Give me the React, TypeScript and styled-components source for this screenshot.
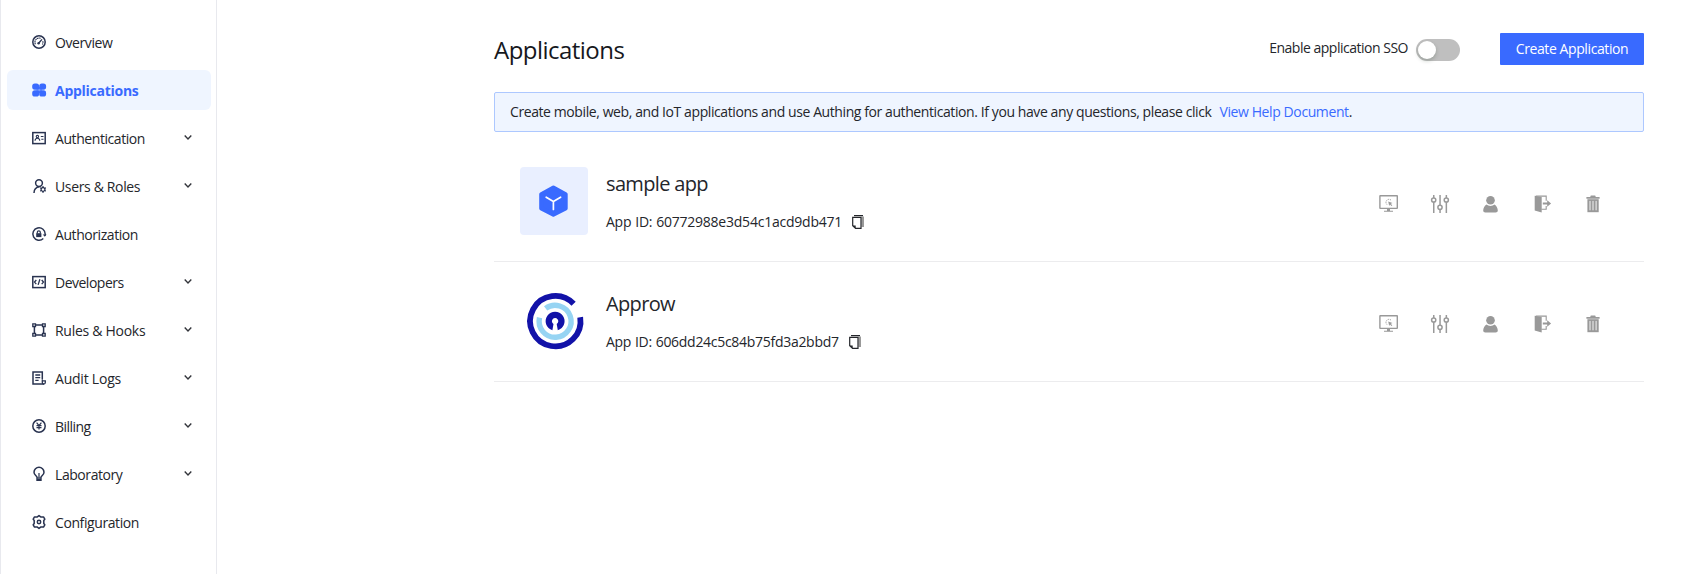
import React from 'react';
import styled, { createGlobalStyle } from 'styled-components';

const GlobalStyle = createGlobalStyle`
  * { box-sizing: border-box; }
  body {
    margin: 0;
    background: #fff;
    color: #24262b;
    font-family: 'Open Sans', 'Noto Sans', sans-serif;
    font-size: 14px;
    line-height: 21px;
    letter-spacing: -0.4px;
  }
`;

const Page = styled.div`
  display: flex;
  height: 574px;
  overflow: hidden;
`;

const Sidebar = styled.nav`
  display: flex;
  flex-direction: column;
  gap: 8px;
  width: 217px;
  flex: none;
  padding: 22px 5px 0 6px;
  border-left: 1px solid #e8e9ee;
  border-right: 1px solid #e8e9ee;
`;

const NavItem = styled.a<{ $active?: boolean }>`
  display: flex;
  align-items: center;
  height: 40px;
  flex: none;
  padding: 0 19px 0 25px;
  border-radius: 6px;
  cursor: pointer;
  color: ${p => (p.$active ? '#396aff' : '#24262b')};
  background: ${p => (p.$active ? '#eff5ff' : 'transparent')};
  font-weight: ${p => (p.$active ? 700 : 400)};
`;

const NavIcon = styled.svg<{ $active?: boolean }>`
  width: 14px;
  height: 14px;
  flex: none;
  margin-right: 9px;
  overflow: visible;
  fill: none;
  stroke: ${p => (p.$active ? '#396aff' : '#293350')};
  stroke-width: 1.5;
`;

const NavLabel = styled.span<{ $spacing: number }>`
  flex: 1;
  padding-top: 1px;
  white-space: nowrap;
  letter-spacing: ${p => p.$spacing}px;
`;

const Chevron = styled.svg`
  width: 8px;
  height: 5px;
  margin-top: -2px;
  fill: none;
  stroke: #33353b;
  stroke-width: 1.4;
`;

const Main = styled.main`
  flex: 1;
  display: flex;
  flex-direction: column;
  padding: 33px 62px 0 277px;
`;

const Header = styled.header`
  display: flex;
  align-items: flex-start;
  height: 59px;
`;

const Title = styled.h1`
  flex: 1;
  margin: 0;
  font-size: 24px;
  font-weight: 400;
  line-height: 33px;
  letter-spacing: -0.53px;
  color: #16181d;
`;

const SsoLabel = styled.span`
  margin: 4px 8px 0 0;
  letter-spacing: -0.49px;
`;

const Switch = styled.button`
  width: 44px;
  height: 22px;
  margin: 6px 40px 0 0;
  padding: 2px;
  border: 0;
  border-radius: 11px;
  background: #bfbfbf;
`;

const SwitchThumb = styled.span`
  display: block;
  width: 18px;
  height: 18px;
  border-radius: 50%;
  background: #fff;
  box-shadow: 0 2px 4px rgba(0, 35, 11, 0.2);
`;

const CreateButton = styled.button`
  width: 144px;
  height: 32px;
  padding: 0 0 1px;
  border: 0;
  border-radius: 1px;
  background: #396aff;
  color: #fff;
  font: inherit;
  letter-spacing: -0.4px;
`;

const Notice = styled.p`
  display: flex;
  align-items: center;
  height: 40px;
  flex: none;
  margin: 0;
  padding: 0 15px 1px;
  border: 1px solid #adc8ff;
  border-radius: 2px;
  background: #eff5ff;
  white-space: pre;
`;

const NoticeText = styled.span`
  letter-spacing: -0.41px;
`;

const HelpLink = styled.a`
  margin-left: 8px;
  color: #396aff;
`;

const AppList = styled.ul`
  margin: 10px 0 0;
  padding: 0;
  list-style: none;
`;

const AppRow = styled.li`
  display: flex;
  height: 120px;
  padding: 25px 41px 0 26px;
  border-bottom: 1px solid #ececee;
`;

const AppLogo = styled.svg`
  width: 68px;
  height: 68px;
  flex: none;
  border-radius: 4px;
`;

const AppInfo = styled.div`
  flex: 1;
  padding: 2px 0 0 18px;
`;

const AppName = styled.h2`
  margin: 0;
  font-size: 20px;
  font-weight: 400;
  line-height: 29px;
  letter-spacing: -0.65px;
`;

const AppId = styled.div<{ $spacing: number }>`
  display: flex;
  align-items: center;
  margin-top: 13px;
  letter-spacing: ${p => p.$spacing}px;
  word-spacing: 0.5px;
`;

const CopyIcon = styled.svg`
  width: 12px;
  height: 14px;
  margin: 1px 0 0 10px;
`;

const Actions = styled.div`
  display: flex;
  gap: 31px;
  padding-top: 27px;
`;

const ActionIcon = styled.svg`
  width: 20px;
  height: 20px;
  fill: #999;
  stroke: none;
`;

type NavEntry = {
  label: string;
  spacing: number;
  icon: React.ReactNode;
  active?: boolean;
  expandable?: boolean;
};

const navEntries: NavEntry[] = [
  {
    label: 'Overview',
    spacing: -0.4,
    icon: (
      <>
        <circle cx="7" cy="7" r="6.2" />
        <path d="M3.4 9.2A4.2 4.2 0 0 1 9 3.5M10.8 6.2A4.2 4.2 0 0 1 10.4 9.4" strokeWidth="1.1" strokeDasharray="1.6 .5" />
        <path d="M6.8 8 10 4.4" strokeWidth="1.4" />
        <circle cx="6.6" cy="8.2" r="1.2" fill="#293350" stroke="none" />
      </>
    ),
  },
  {
    label: 'Applications',
    spacing: -0.27,
    active: true,
    icon: (
      <g fill="#396aff" stroke="none">
        <rect x=".2" y=".5" width="6.9" height="6.2" rx="2.6" />
        <rect x="7.200" y=".5" width="6.9" height="6.2" rx="2.6" />
        <rect x=".2" y="7.300" width="6.9" height="6.2" rx="2.6" />
        <rect x="7.200" y="7.300" width="6.9" height="6.2" rx="2.6" />
        <path d="M4.500 4h2.600v2.700H4.500ZM7.200 4h2.600v2.700H7.200ZM4.500 7.300h2.600V10H4.500ZM7.200 7.300h2.600V10H7.200Z" />
      </g>
    ),
  },
  {
    label: 'Authentication',
    spacing: -0.43,
    expandable: true,
    icon: (
      <>
        <rect x=".8" y="1.6" width="12.4" height="11" />
        <circle cx="5.4" cy="5.6" r="1.2" strokeWidth="1.1" />
        <path d="M3 9.7c.2-1.7 1-2.4 2.4-2.4s2.2.7 2.4 2.4M8.800 5.500h2.700M9.300 8.200h2.200" strokeWidth="1.1" />
      </>
    ),
  },
  {
    label: 'Users & Roles',
    spacing: -0.35,
    expandable: true,
    icon: (
      <>
        <circle cx="7" cy="4.1" r="3.4" />
        <path d="M2 14c0-3.400 1.900-5.700 5.500-6.200" />
        <path d="m11 7.500 2.500 1.450v2.900L11 13.300l-2.500-1.450v-2.900Z" fill="#293350" stroke="none" />
        <path d="M11 7v7M8 8.700l6 3.500M14 8.700l-6 3.500" strokeWidth="1" />
        <circle cx="11" cy="10.450" r="1.200" fill="#fff" stroke="none" />
      </>
    ),
  },
  {
    label: 'Authorization',
    spacing: -0.43,
    icon: (
      <>
        <path d="M11.300 11.500A6.200 6.200 0 1 1 13.200 7.300v1.200" />
        <path d="M10.700 7.400h3.800l-1.700 2.300Z" fill="#293350" stroke="none" />
        <rect x="4.200" y="6.200" width="5.200" height="3.900" fill="#293350" stroke="none" />
        <path d="M5.300 6.400V5.300a1.500 1.500 0 0 1 3 0v1.100" strokeWidth="1.200" />
      </>
    ),
  },
  {
    label: 'Developers',
    spacing: -0.5,
    expandable: true,
    icon: (
      <>
        <rect x=".8" y="1.600" width="12.400" height="11" />
        <path d="M4.300 5 2.500 7.100l1.800 2.100M9.700 5l1.800 2.100-1.800 2.100M7.900 4.300 6.100 9.900" strokeWidth="1.300" />
      </>
    ),
  },
  {
    label: 'Rules & Hooks',
    spacing: -0.28,
    expandable: true,
    icon: (
      <>
        <path d="M3.900 2h6.200M3.900 12h6.200M2.400 3.800v6.400M11.600 3.800v6.400" />
        <path d="M.8.800h2.700v2.700H.8ZM10.500.800h2.700v2.700h-2.700ZM.8 10.500h2.700v2.700H.8ZM10.500 10.500h2.700v2.700h-2.700Z" strokeWidth="1.300" />
      </>
    ),
  },
  {
    label: 'Audit Logs',
    spacing: -0.22,
    expandable: true,
    icon: (
      <>
        <path d="M10.300 8V.9H1v12.200h11" />
        <path d="M3.300 4h4.900M3.300 6.700h4.900M3.300 9.400h3.300" strokeWidth="1.300" />
        <path d="M10.300 8.300v3.300a1.500 1.500 0 1 0 3 0V9.800h-2.500" strokeWidth="1.300" />
      </>
    ),
  },
  {
    label: 'Billing',
    spacing: -0.55,
    expandable: true,
    icon: (
      <>
        <circle cx="7" cy="7" r="6.200" />
        <path d="m4.600 3.600 2.400 3 2.400-3M7 6.400v4.200M4.500 6.700h5M4.500 8.600h5" strokeWidth="1.200" />
      </>
    ),
  },
  {
    label: 'Laboratory',
    spacing: -0.43,
    expandable: true,
    icon: (
      <>
        <path d="M4.900 10.100C4.700 9 2 7.900 2 5.200a5 5 0 0 1 10 0c0 2.700-2.700 3.800-2.900 4.900" />
        <path d="M7 6v4M4.900 9.700v3.600h4.200V9.700M4.900 10.900h4.200M5 12.300h4" strokeWidth="1.200" />
      </>
    ),
  },
  {
    label: 'Configuration',
    spacing: -0.41,
    icon: (
      <>
        <path d="M5 2.100 7 .6l2 1.500 2.500-.2 1.300 2.300-1 1.300v3l1 1.300-1.300 2.300-2.500-.2-2 1.500-2-1.500-2.500.2-1.300-2.300 1-1.300v-3l-1-1.300 1.300-2.300Z" strokeLinejoin="round" />
        <circle cx="7" cy="7" r="1.700" />
      </>
    ),
  },
];

const BoxLogo = () => (
  <AppLogo viewBox="0 0 68 68">
    <rect width="68" height="68" fill="#e9efff" />
    <path d="M33.400 20.500 45.700 27.300V41.400L33.400 47.700 21.200 41.400V27.300Z" fill="#396aff" stroke="#396aff" strokeWidth="4" strokeLinejoin="round" />
    <path d="m26.200 30.200 7.200 4.400 7.200-4.400M33.400 34.600v7.800" fill="none" stroke="#fff" strokeWidth="1.700" strokeLinecap="round" />
  </AppLogo>
);

const ApprowLogo = () => (
  <AppLogo viewBox="0 0 68 68" fill="none">
    <path d="M53.600 16.800A25.200 25.200 0 1 0 60.200 30.200" stroke="#1212a8" strokeWidth="5.800" />
    <path d="M25.600 21.400A16 16 0 1 1 19.500 30.700" stroke="#96d4f3" strokeWidth="5.400" />
    <path d="M32.400 43.300A9.500 9.500 0 1 1 37.800 43.300L36.700 37A3.200 3.200 0 1 0 33.500 37Z" fill="#1212a8" />
  </AppLogo>
);

const actionIcons: { name: string; art: React.ReactNode }[] = [
  {
    name: 'Experience',
    art: (
      <>
        <path d="M1.200 1.100h16.800a1 1 0 0 1 1 1v12a1 1 0 0 1-1 1H1.200a1 1 0 0 1-1-1v-12a1 1 0 0 1 1-1Zm.4 1.400v11.200h16V2.500Z" fillRule="evenodd" />
        <path d="M8 15h3v1.700h3v1.100H5v-1.100h3ZM9.200 7.400l4.300 1.700-1.700.7 1.500 1.600-.8.700-1.500-1.600-.8 1.500Z" />
        <path d="M8 10.600a3 3 0 1 1 4-4.500" fill="none" stroke="#999" strokeDasharray="1.200 .8" />
      </>
    ),
  },
  {
    name: 'Settings',
    art: (
      <>
        <path d="M3 1h1.500v3H3ZM3 8h1.500v11H3ZM9.300 1h1.500v10.500H9.300ZM9.300 15.500h1.500V19H9.300ZM15.600 1h1.500v3h-1.500ZM15.600 8h1.500v11h-1.500Z" />
        <g fill="none" stroke="#999" strokeWidth="1.500">
          <circle cx="3.700" cy="6" r="2.100" />
          <circle cx="10" cy="13.300" r="2.100" />
          <circle cx="16.300" cy="6" r="2.100" />
        </g>
      </>
    ),
  },
  {
    name: 'Users',
    art: (
      <g transform="translate(-.5 .4)">
        <circle cx="10" cy="5.900" r="4.300" />
        <path d="M6 10.200c1 .9 2.500 1.400 4 1.400s3-.500 4-1.400c1.800.9 3.300 3.800 3.300 6 0 1.300-.8 1.900-2.200 1.900H4.900c-1.400 0-2.200-.6-2.200-1.900 0-2.200 1.500-5.100 3.300-6Z" />
      </g>
    ),
  },
  {
    name: 'Sign out',
    art: (
      <g transform="translate(.9 0)">
        <path d="M1.800 1.700 8.800 3v15.500l-7-2Z" />
        <path d="M3 2.100h10.300v4.700M13.300 12v3.300H8.500" fill="none" stroke="#999" strokeWidth="1.100" />
        <path d="M9.900 8.500h4.400V6.300l3.900 3.200-3.900 3.200v-2.300H9.900Z" />
      </g>
    ),
  },
  {
    name: 'Delete',
    art: (
      <>
        <path d="M7.800 1.500h4.400l.6 1.500h3.800v1.800H3.400V3h3.800Z" />
        <path d="M4.400 5.200h11.300v13H4.400Z" />
        <path d="M7 6.900v9.400M10 6.900v9.400M13.100 6.900v9.400" stroke="#fff" strokeWidth=".9" />
      </>
    ),
  },
];

const apps = [
  { name: 'sample app', id: '60772988e3d54c1acd9db471', spacing: -0.23, logo: <BoxLogo /> },
  { name: 'Approw', id: '606dd24c5c84b75fd3a2bbd7', spacing: -0.29, logo: <ApprowLogo /> },
];

export default function App() {
  return (
    <>
      <GlobalStyle />
      <Page>
        <Sidebar>
          {navEntries.map(entry => (
            <NavItem key={entry.label} $active={entry.active}>
              <NavIcon viewBox="0 0 14 14" $active={entry.active}>{entry.icon}</NavIcon>
              <NavLabel $spacing={entry.spacing}>{entry.label}</NavLabel>
              {entry.expandable && (
                <Chevron viewBox="0 0 8 5"><path d="m.7.600 3.300 3.300L7.300.600" /></Chevron>
              )}
            </NavItem>
          ))}
        </Sidebar>
        <Main>
          <Header>
            <Title>Applications</Title>
            <SsoLabel>Enable application SSO</SsoLabel>
            <Switch role="switch" aria-checked="false"><SwitchThumb /></Switch>
            <CreateButton>Create Application</CreateButton>
          </Header>
          <Notice>
            <NoticeText>Create mobile, web, and IoT applications and use Authing for authentication. If you have any questions, please click</NoticeText>
            <HelpLink>View Help Document</HelpLink>
            <span>.</span>
          </Notice>
          <AppList>
            {apps.map(app => (
              <AppRow key={app.id}>
                {app.logo}
                <AppInfo>
                  <AppName>{app.name}</AppName>
                  <AppId $spacing={app.spacing}>
                    App ID: {app.id}
                    <CopyIcon viewBox="0 0 12 14">
                      <path d="M9.500 1.500H12V12H9.500Z" fill="#999" />
                      <path d="M2 .6h9" fill="none" stroke="#24262b" strokeWidth="1.200" />
                      <path d="M.7 2.400h8.300v11H3.600L.7 10.700Z" fill="#fff" stroke="#24262b" strokeWidth="1.200" />
                      <path d="M.7 10.500h3v3Z" fill="#24262b" />
                    </CopyIcon>
                  </AppId>
                </AppInfo>
                <Actions>
                  {actionIcons.map(icon => (
                    <ActionIcon key={icon.name} viewBox="0 0 20 20" aria-label={icon.name}>{icon.art}</ActionIcon>
                  ))}
                </Actions>
              </AppRow>
            ))}
          </AppList>
        </Main>
      </Page>
    </>
  );
}
